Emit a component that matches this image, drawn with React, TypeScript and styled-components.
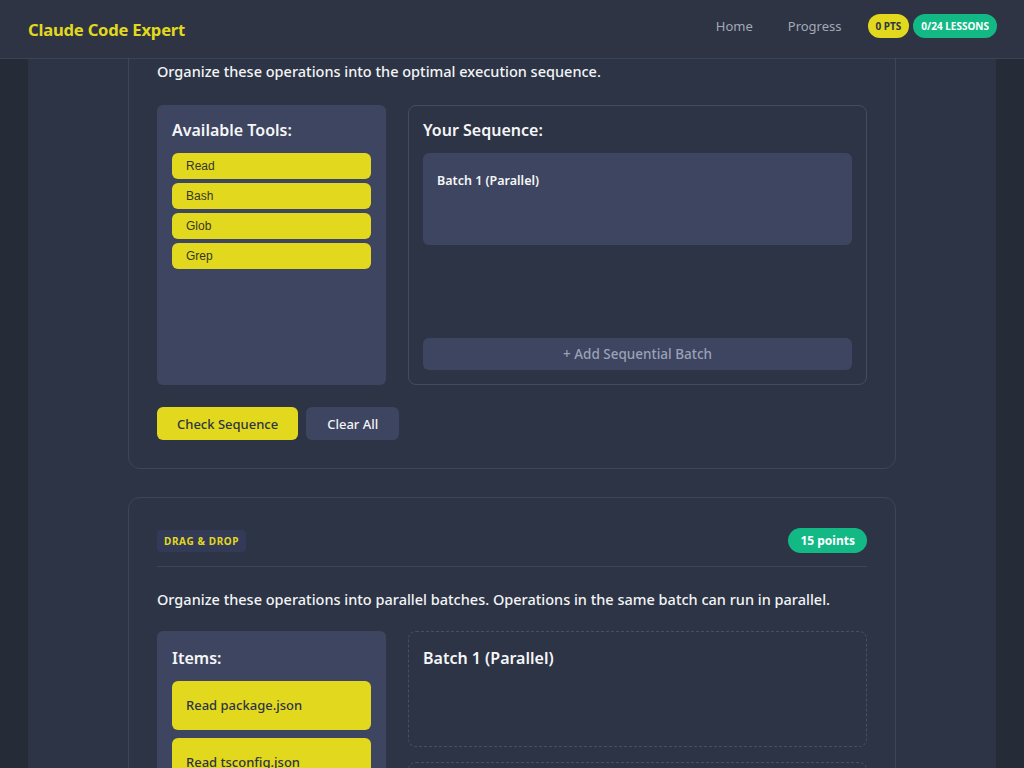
import React, { useLayoutEffect, useRef } from "react";
import styled, { createGlobalStyle } from "styled-components";

const GlobalStyle = createGlobalStyle`
  html, body {
    margin: 0;
    padding: 0;
    height: 100%;
    overflow: hidden;
    background: #262c37;
  }
  body {
    font-family: "Noto Sans", "Open Sans", sans-serif;
    color: #f1f3f6;
  }
  #root {
    height: 100%;
  }
  * {
    box-sizing: border-box;
  }
`;

const Shell = styled.div`
  height: 100vh;
  display: flex;
  flex-direction: column;
`;

const Header = styled.header`
  flex: none;
  height: 59px;
  display: flex;
  align-items: center;
  justify-content: space-between;
  padding: 0 27px 0 28px;
  background: #2e3443;
  border-bottom: 1px solid #3c4354;
`;

const Brand = styled.h1`
  margin: 1px 0 0;
  font-size: 16.6px;
  font-weight: 700;
  color: #e2d91e;
  letter-spacing: -0.2px;
`;

const Nav = styled.nav`
  display: flex;
  align-items: center;
  margin-bottom: 6px;
`;

const NavLink = styled.a`
  font-size: 13px;
  color: #a2a9b7;
  text-decoration: none;
  margin-right: 35px;

  &:last-of-type {
    margin-right: 26px;
  }
`;

const Badges = styled.div`
  display: flex;
  gap: 4px;
`;

const Badge = styled.span<{ $tone: "yellow" | "green" }>`
  height: 24px;
  display: inline-flex;
  align-items: center;
  padding: 0 8px;
  border-radius: 12px;
  font-size: 10px;
  font-weight: 700;
  background: ${(p) => (p.$tone === "yellow" ? "#e2d91e" : "#13b985")};
  color: ${(p) => (p.$tone === "yellow" ? "#2e3443" : "#ffffff")};
`;

const Scroller = styled.div`
  flex: 1;
  overflow: hidden;
`;

const Main = styled.main`
  max-width: 968px;
  margin: 0 auto;
  min-height: 100%;
  background: #2d3445;
  padding: 28px 0 60px;
  display: flex;
  flex-direction: column;
  gap: 28px;
`;

const Card = styled.section`
  width: 768px;
  margin: 0 auto;
  border: 1px solid #3e4557;
  border-radius: 12px;
  padding: 29px 28px 28px;
`;

const CardTop = styled.div`
  display: flex;
  align-items: center;
  justify-content: space-between;
  padding: 1px 0 13px;
  border-bottom: 1px solid #3f4658;
`;

const Tag = styled.span`
  height: 22px;
  display: inline-flex;
  align-items: center;
  padding: 0 7px;
  border-radius: 4px;
  background: #333a57;
  color: #e2d91e;
  font-size: 10px;
  font-weight: 700;
  letter-spacing: 0.6px;
`;

const Points = styled.span`
  height: 25px;
  display: inline-flex;
  align-items: center;
  padding: 0 12px;
  border-radius: 13px;
  background: #13b985;
  color: #ffffff;
  font-size: 12px;
  font-weight: 700;
`;

const Prompt = styled.p<{ $tight?: boolean }>`
  margin: ${(p) => (p.$tight ? "21px 0 21px" : "22px 0 23px")};
  font-size: 14.5px;
  font-weight: 500;
  line-height: 22px;
  color: #f3f4f6;
`;

const Board = styled.div`
  display: grid;
  grid-template-columns: 229px 1fr;
  gap: 22px;
`;

const Pool = styled.div<{ $roomy?: boolean }>`
  min-height: 280px;
  background: #3e4560;
  border-radius: 6px;
  padding: ${(p) => (p.$roomy ? "17px 15px 15px" : "15px")};
`;

const PanelTitle = styled.h3`
  margin: 0 0 13px;
  font-size: 16px;
  font-weight: 600;
  line-height: 20px;
  color: #f5f6f8;
`;

const ToolList = styled.div`
  display: flex;
  flex-direction: column;
  gap: 4px;
`;

const ToolChip = styled.button`
  height: 26px;
  display: flex;
  align-items: center;
  padding: 0 14px;
  border: none;
  border-radius: 6px;
  background: #e2d91e;
  color: #363626;
  font-family: "Liberation Sans", Arial, sans-serif;
  font-size: 12px;
  text-align: left;
`;

const Sequence = styled.div`
  display: flex;
  flex-direction: column;
  border: 1px solid #454c60;
  border-radius: 8px;
  padding: 14px;
`;

const BatchBox = styled.div`
  min-height: 92px;
  background: #3e4560;
  border-radius: 6px;
  padding: 19px 14px 14px;
  font-size: 12.5px;
  font-weight: 600;
  color: #f5f6f8;
`;

const AddBatch = styled.button`
  margin-top: auto;
  height: 32px;
  border: none;
  border-radius: 6px;
  background: #3e4560;
  color: #9aa2b6;
  font-family: inherit;
  font-size: 13.5px;
  font-weight: 500;
`;

const Actions = styled.div`
  display: flex;
  gap: 8px;
  margin-top: 22px;
`;

const ActionButton = styled.button<{ $primary?: boolean }>`
  height: 33px;
  padding: 0 ${(p) => (p.$primary ? "20px" : "21px")};
  border: none;
  border-radius: 6px;
  font-family: inherit;
  font-size: 13px;
  font-weight: 500;
  background: ${(p) => (p.$primary ? "#e2d91e" : "#3e4560")};
  color: ${(p) => (p.$primary ? "#2e3443" : "#f3f4f6")};
`;

const ItemList = styled.div`
  display: flex;
  flex-direction: column;
  gap: 8px;
`;

const ItemChip = styled.div`
  padding: 15px 14px;
  border-radius: 6px;
  background: #e2d91e;
  color: #2e3443;
  font-size: 13px;
  font-weight: 500;
  line-height: 19px;
`;

const Zones = styled.div`
  display: flex;
  flex-direction: column;
  gap: 15px;
`;

const DropZone = styled.div`
  min-height: 116px;
  border: 1px dashed #465064;
  border-radius: 8px;
  padding: 16px 14px;
`;

const tools = ["Read", "Bash", "Glob", "Grep"];
const items = [
  "Read package.json",
  "Read tsconfig.json",
  "Read README.md",
  "Run npm install",
  "Run npm test",
];

export default function App() {
  const scrollRef = useRef<HTMLDivElement>(null);

  useLayoutEffect(() => {
    if (scrollRef.current) {
      scrollRef.current.scrollTop = 119;
    }
  }, []);

  return (
    <>
      <GlobalStyle />
      <Shell>
        <Header>
          <Brand>Claude Code Expert</Brand>
          <Nav>
            <NavLink href="#">Home</NavLink>
            <NavLink href="#">Progress</NavLink>
            <Badges>
              <Badge $tone="yellow">0 PTS</Badge>
              <Badge $tone="green">0/24 LESSONS</Badge>
            </Badges>
          </Nav>
        </Header>

        <Scroller ref={scrollRef}>
          <Main>
            <Card>
              <CardTop>
                <Tag>SEQUENCE</Tag>
                <Points>10 points</Points>
              </CardTop>
              <Prompt>Organize these operations into the optimal execution sequence.</Prompt>
              <Board>
                <Pool>
                  <PanelTitle>Available Tools:</PanelTitle>
                  <ToolList>
                    {tools.map((t) => (
                      <ToolChip key={t}>{t}</ToolChip>
                    ))}
                  </ToolList>
                </Pool>
                <Sequence>
                  <PanelTitle>Your Sequence:</PanelTitle>
                  <BatchBox>Batch 1 (Parallel)</BatchBox>
                  <AddBatch>+ Add Sequential Batch</AddBatch>
                </Sequence>
              </Board>
              <Actions>
                <ActionButton $primary>Check Sequence</ActionButton>
                <ActionButton>Clear All</ActionButton>
              </Actions>
            </Card>

            <Card>
              <CardTop>
                <Tag>DRAG &amp; DROP</Tag>
                <Points>15 points</Points>
              </CardTop>
              <Prompt $tight>
                Organize these operations into parallel batches. Operations in the same batch can run
                in parallel.
              </Prompt>
              <Board>
                <Pool $roomy>
                  <PanelTitle>Items:</PanelTitle>
                  <ItemList>
                    {items.map((i) => (
                      <ItemChip key={i}>{i}</ItemChip>
                    ))}
                  </ItemList>
                </Pool>
                <Zones>
                  <DropZone>
                    <PanelTitle>Batch 1 (Parallel)</PanelTitle>
                  </DropZone>
                  <DropZone>
                    <PanelTitle>Batch 2 (Parallel)</PanelTitle>
                  </DropZone>
                  <DropZone>
                    <PanelTitle>Batch 3 (Parallel)</PanelTitle>
                  </DropZone>
                </Zones>
              </Board>
            </Card>
          </Main>
        </Scroller>
      </Shell>
    </>
  );
}
